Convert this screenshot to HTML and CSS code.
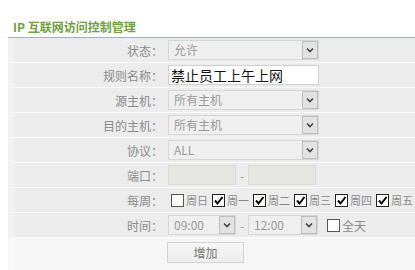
FILE: index.html
```html
<!DOCTYPE html>
<html lang="zh-CN">
<head>
  <meta charset="UTF-8">
  <title>IP 互联网访问控制管理</title>
  <link rel="stylesheet" href="styles.css">
</head>
<body>

  <h2 class="title">IP 互联网访问控制管理</h2>

  <div class="panel">
    <div class="row">
      <div class="label">状态：</div>
      <div class="field">
        <div class="select wide"><span>允许</span><i class="arrow"></i></div>
      </div>
    </div>

    <div class="row">
      <div class="label">规则名称：</div>
      <div class="field">
        <input class="text wide" type="text" value="禁止员工上午上网">
      </div>
    </div>

    <div class="row">
      <div class="label">源主机：</div>
      <div class="field">
        <div class="select wide"><span>所有主机</span><i class="arrow"></i></div>
      </div>
    </div>

    <div class="row">
      <div class="label">目的主机：</div>
      <div class="field">
        <div class="select wide"><span>所有主机</span><i class="arrow"></i></div>
      </div>
    </div>

    <div class="row">
      <div class="label">协议：</div>
      <div class="field">
        <div class="select wide"><span>ALL</span><i class="arrow"></i></div>
      </div>
    </div>

    <div class="row">
      <div class="label">端口：</div>
      <div class="field">
        <input class="text port" type="text" disabled>
        <span class="dash">-</span>
        <input class="text port" type="text" disabled>
      </div>
    </div>

    <div class="row">
      <div class="label">每周：</div>
      <div class="field days">
        <label class="day"><span class="cb"></span>周日</label>
        <label class="day"><span class="cb on"></span>周一</label>
        <label class="day"><span class="cb on"></span>周二</label>
        <label class="day"><span class="cb on"></span>周三</label>
        <label class="day"><span class="cb on"></span>周四</label>
        <label class="day"><span class="cb on"></span>周五</label>
      </div>
    </div>

    <div class="row">
      <div class="label">时间：</div>
      <div class="field">
        <div class="select time"><span>09:00</span><i class="arrow"></i></div>
        <span class="dash">-</span>
        <div class="select time"><span>12:00</span><i class="arrow"></i></div>
        <label class="day allday"><span class="cb"></span>全天</label>
      </div>
    </div>

    <div class="row actions">
      <div class="label"></div>
      <div class="field">
        <button class="btn">增加</button>
      </div>
    </div>
  </div>

</body>
</html>
```

FILE: styles.css
```css
body {
  margin: 0;
  font-family: "Noto Sans CJK SC", "Liberation Sans", sans-serif;
  font-size: 12px;
  color: #888;
  background: #fff;
  width: 415px;
  overflow: hidden;
}

.title {
  margin: 0;
  padding: 17px 0 0 13px;
  height: 20px;
  font-size: 12px;
  font-weight: bold;
  line-height: 20px;
  color: #6f9f45;
}

.panel {
  margin-left: 8px;
  border-top: 1px solid #9cc07a;
}

.row {
  display: flex;
  align-items: center;
  height: 24px;
  background: #ececec;
  border-bottom: 1px solid #fafafa;
  border-left: 7px solid #f1f1f1;
}

.label {
  flex-shrink: 0;
  width: 148px;
  margin-right: 5px;
  text-align: right;
  color: #8a8a8a;
  white-space: nowrap;
}

.field {
  flex-shrink: 0;
  display: flex;
  align-items: center;
  white-space: nowrap;
}

.select {
  display: flex;
  align-items: center;
  justify-content: space-between;
  box-sizing: border-box;
  height: 20px;
  border: 1px solid #d6d6d6;
  background: #efefef;
  color: #999;
  padding-left: 5px;
}

.select span {
  line-height: 18px;
}

.arrow {
  display: block;
  box-sizing: border-box;
  width: 16px;
  height: 18px;
  border: 1px solid #bdbdbd;
  background: #e2e2e2 url("data:image/svg+xml;utf8,<svg xmlns='http://www.w3.org/2000/svg' width='8' height='6'><path d='M1 1.5 L4 4.5 L7 1.5' fill='none' stroke='%23444' stroke-width='1.6'/></svg>") no-repeat center;
}

.wide {
  width: 151px;
}

.time {
  width: 68px;
}

.time + .dash + .time {
  width: 70px;
}

.text {
  box-sizing: border-box;
  height: 20px;
  margin: 0;
  padding: 0 2px;
  border: 1px solid #d0d0d0;
  background: #fff;
  font-family: inherit;
  font-size: 14px;
  color: #111;
}

.port {
  width: 68px;
  background: #e6e6e0;
  border-color: #dadada;
}

.dash {
  width: 12px;
  text-align: center;
  color: #999;
}

.days {
  padding-left: 3px;
}

.day {
  display: flex;
  align-items: center;
  margin-right: 4px;
  font-size: 11px;
  color: #8a8a8a;
}

.cb {
  box-sizing: border-box;
  width: 13px;
  height: 13px;
  margin-right: 2px;
  border: 1px solid #555;
  background: #fff no-repeat center;
}

.cb.on {
  border-color: #222;
  background-image: url("data:image/svg+xml;utf8,<svg xmlns='http://www.w3.org/2000/svg' width='11' height='11'><path d='M2 5.5 L4.5 8.5 L9.5 2' fill='none' stroke='%23000' stroke-width='2'/></svg>");
}

.allday {
  margin-left: 9px;
  font-size: 12px;
}

.actions {
  height: 28px;
  background: #f6f6f6;
  border-left-color: #f8f8f8;
  border-bottom: none;
  align-items: flex-start;
  padding-top: 4px;
}

.btn {
  width: 77px;
  height: 21px;
  margin-left: -1px;
  padding: 0;
  border: 1px solid #d2d2d2;
  background: linear-gradient(#f7f7f7, #ececec);
  font-family: inherit;
  font-size: 12px;
  color: #777;
}
```
